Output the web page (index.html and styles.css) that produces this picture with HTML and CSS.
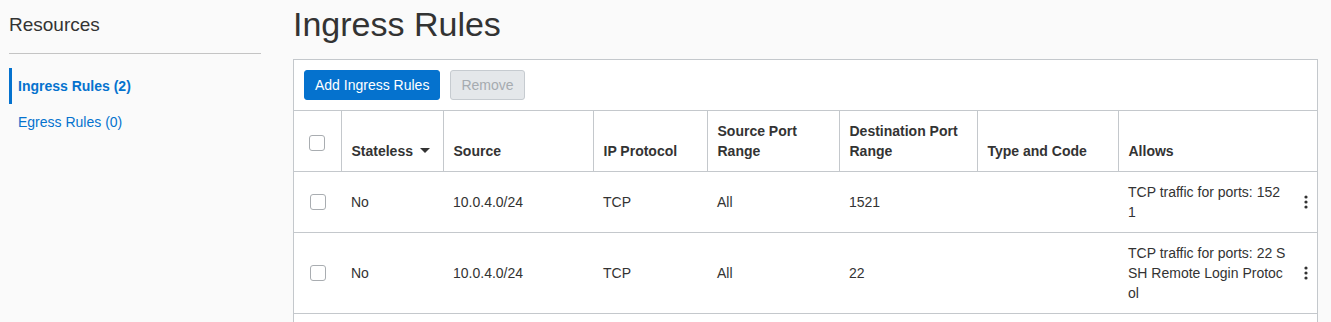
FILE: index.html
```html
<!DOCTYPE html>
<html lang="en">
<head>
    <meta charset="UTF-8">
    <meta name="viewport" content="width=device-width, initial-scale=1.0">
    <title>Ingress Rules</title>
    <link rel="stylesheet" href="styles.css">
</head>
<body>

    <div class="page">

        <aside class="sidebar">
            <h3 class="sidebar-title">Resources</h3>
            <ul class="sidebar-nav">
                <li class="active"><a href="#">Ingress Rules (2)</a></li>
                <li><a href="#">Egress Rules (0)</a></li>
            </ul>
        </aside>

        <main class="content">
            <h1 class="page-title">Ingress Rules</h1>

            <div class="panel">
                <div class="toolbar">
                    <button class="btn btn-primary" type="button">Add Ingress Rules</button>
                    <button class="btn btn-disabled" type="button" disabled>Remove</button>
                </div>

                <table class="rules-table">
                    <colgroup>
                        <col style="width: 47px">
                        <col style="width: 102px">
                        <col style="width: 150px">
                        <col style="width: 114px">
                        <col style="width: 132px">
                        <col style="width: 138px">
                        <col style="width: 141px">
                        <col>
                    </colgroup>
                    <thead>
                        <tr>
                            <th class="check-cell"><input type="checkbox" class="check"></th>
                            <th>Stateless <span class="caret"></span></th>
                            <th>Source</th>
                            <th>IP Protocol</th>
                            <th>Source Port Range</th>
                            <th>Destination Port Range</th>
                            <th>Type and Code</th>
                            <th>Allows</th>
                        </tr>
                    </thead>
                    <tbody>
                        <tr>
                            <td class="check-cell"><input type="checkbox" class="check"></td>
                            <td>No</td>
                            <td>10.0.4.0/24</td>
                            <td>TCP</td>
                            <td>All</td>
                            <td>1521</td>
                            <td></td>
                            <td class="allows-cell">
                                <div class="allows">
                                    <span class="allows-text">TCP traffic for ports: 1521</span>
                                    <button class="kebab" type="button" aria-label="Actions">
                                        <svg width="4" height="14" viewBox="0 0 4 14"><circle cx="2" cy="2" r="1.6"/><circle cx="2" cy="7" r="1.6"/><circle cx="2" cy="12" r="1.6"/></svg>
                                    </button>
                                </div>
                            </td>
                        </tr>
                        <tr>
                            <td class="check-cell"><input type="checkbox" class="check"></td>
                            <td>No</td>
                            <td>10.0.4.0/24</td>
                            <td>TCP</td>
                            <td>All</td>
                            <td>22</td>
                            <td></td>
                            <td class="allows-cell">
                                <div class="allows">
                                    <span class="allows-text">TCP traffic for ports: 22 SSH Remote Login Protocol</span>
                                    <button class="kebab" type="button" aria-label="Actions">
                                        <svg width="4" height="14" viewBox="0 0 4 14"><circle cx="2" cy="2" r="1.6"/><circle cx="2" cy="7" r="1.6"/><circle cx="2" cy="12" r="1.6"/></svg>
                                    </button>
                                </div>
                            </td>
                        </tr>
                    </tbody>
                </table>

                <div class="panel-footer"></div>
            </div>
        </main>

    </div>

</body>
</html>
```

FILE: styles.css
```css
body {
    margin: 0;
    font-family: "Liberation Sans", Arial, sans-serif;
    font-size: 14px;
    color: #333;
    background-color: #fafafa;
}

.page {
    display: flex;
    gap: 32px;
    padding: 0 13px 0 9px;
}

/* sidebar */

.sidebar {
    width: 252px;
    flex-shrink: 0;
}

.sidebar-title {
    margin: 0;
    padding: 13px 0 16px;
    font-size: 19px;
    line-height: 24px;
    font-weight: normal;
    color: #333;
    border-bottom: 1px solid #c4c4c4;
}

.sidebar-nav {
    list-style: none;
    margin: 14px 0 0;
    padding: 0;
}

.sidebar-nav li {
    border-left: 3px solid transparent;
}

.sidebar-nav li.active {
    border-left-color: #0572ce;
}

.sidebar-nav a {
    display: block;
    padding: 8px 0 8px 6px;
    line-height: 20px;
    color: #0572ce;
    text-decoration: none;
}

.sidebar-nav li.active a {
    font-weight: bold;
}

/* main */

.content {
    flex: 1;
    min-width: 0;
}

.page-title {
    margin: 0 0 15px;
    padding-top: 4px;
    font-size: 34px;
    line-height: 40px;
    font-weight: normal;
    color: #333;
}

.panel {
    background-color: #fff;
    border: 1px solid #c4c8cc;
}

.toolbar {
    display: flex;
    gap: 10px;
    padding: 10px;
    border-bottom: 1px solid #c4c8cc;
}

.btn {
    height: 30px;
    padding: 0 10px;
    font-family: inherit;
    font-size: 14px;
    border-radius: 3px;
    border: 1px solid transparent;
}

.btn-primary {
    background-color: #0572ce;
    border-color: #0572ce;
    color: #fff;
    cursor: pointer;
}

.btn-disabled {
    background-color: #e4e7ea;
    border-color: #c6cbd0;
    color: #a6abb0;
}

/* table */

.rules-table {
    width: 100%;
    table-layout: fixed;
    border-collapse: collapse;
}

.rules-table th {
    padding: 10px;
    line-height: 20px;
    text-align: left;
    vertical-align: bottom;
    font-weight: bold;
    color: #333;
    border-bottom: 1px solid #c4c8cc;
    border-right: 1px solid #c4c8cc;
}

.rules-table th:last-child {
    border-right: none;
}

.rules-table td {
    padding: 10px;
    line-height: 20px;
    vertical-align: middle;
    color: #333;
    border-bottom: 1px solid #c4c8cc;
}

.rules-table .check-cell {
    padding: 0;
    text-align: center;
    vertical-align: middle;
}

.check {
    appearance: none;
    -webkit-appearance: none;
    display: block;
    width: 16px;
    height: 16px;
    margin: 0 auto;
    border: 1px solid #a9adb1;
    border-radius: 3px;
    background-color: #fff;
}

th .check {
    margin-top: 3px;
}

.caret {
    display: inline-block;
    width: 0;
    height: 0;
    margin-left: 3px;
    vertical-align: 3px;
    border-left: 5px solid transparent;
    border-right: 5px solid transparent;
    border-top: 5px solid #333;
}

.rules-table .allows-cell {
    padding-right: 9px;
}

.allows {
    display: flex;
    align-items: center;
}

.allows-text {
    width: 159px;
    word-break: break-all;
}

.kebab {
    display: flex;
    margin-left: auto;
    padding: 0;
    border: none;
    background: none;
    fill: #333;
    cursor: pointer;
}

.panel-footer {
    height: 40px;
}
```
